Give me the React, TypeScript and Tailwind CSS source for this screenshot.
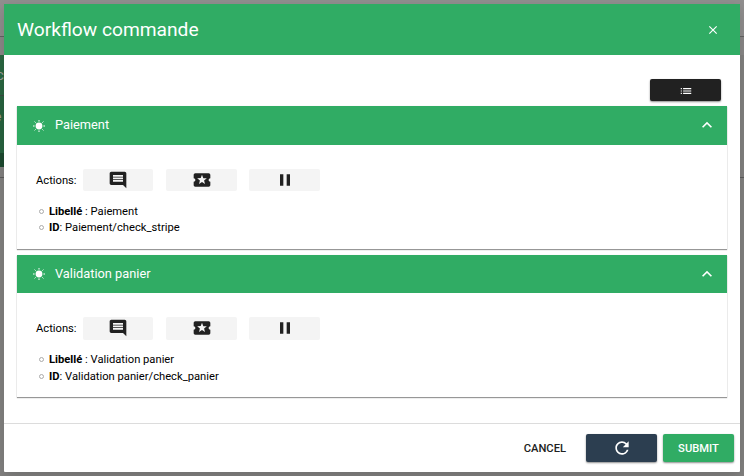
import React from 'react';
import { MdComment, MdLocalPlay, MdPause, MdRefresh, MdList, MdExpandLess, MdClose } from 'react-icons/md';

function SunIcon() {
  return (
    <svg width="12" height="12" viewBox="0 0 12 12" className="shrink-0" fill="#fff">
      <circle cx="6" cy="6" r="3.4" />
      <g stroke="#fff" strokeWidth="1">
        <path d="M6 0v1.6M6 10.4V12M0 6h1.6M10.4 6H12M1.6 1.6l1 1M9.4 9.4l1 1M1.6 10.4l1-1M9.4 2.6l1-1" />
      </g>
    </svg>
  );
}

function ActionButton({ children, narrow }: { children: React.ReactNode; narrow?: boolean }) {
  return (
    <button className={`flex h-full items-center justify-center rounded-xs bg-[#f4f4f4] text-[#212121] ${narrow ? 'w-[70px]' : 'w-[71px]'}`}>
      {children}
    </button>
  );
}

interface StepProps {
  label: string;
  id: string;
  first?: boolean;
}

function Step({ label, id, first }: StepProps) {
  return (
    <section className={`flex flex-col bg-white shadow-[0_1px_1px_rgba(0,0,0,0.4),0_0_1px_rgba(0,0,0,0.08)] ${first ? 'h-[143px]' : 'h-[142px]'}`}>
      <header className={`flex shrink-0 items-center bg-[#30ac64] pr-[10px] pl-4 text-white ${first ? 'h-[39px] pb-px' : 'h-[38px]'}`}>
        <div className={first ? 'pt-[2px]' : ''}>
          <SunIcon />
        </div>
        <span className="ml-[10px] grow text-[12.8px] leading-4">{label}</span>
        <MdExpandLess size={20} />
      </header>
      <div className={`mt-6 flex items-center pl-[19px] ${first ? 'h-[22px]' : 'h-[23px]'}`}>
        <span className="w-[47px] pt-[2px] text-[11.2px]">Actions:</span>
        <div className="flex h-full">
          <ActionButton narrow>
            <MdComment size={20} className="mb-px" />
          </ActionButton>
          <div className="ml-[13px] flex gap-3">
            <ActionButton>
              <MdLocalPlay size={20} className="mb-px" />
            </ActionButton>
            <ActionButton>
              <MdPause size={20} className="mb-px" />
            </ActionButton>
          </div>
        </div>
      </div>
      <ul className={`pl-[22px] text-[11.2px] leading-[16.5px] ${first ? 'mt-[12.6px]' : 'mt-3'}`}>
        <li className="flex items-center">
          <span className="mr-[5px] mb-px size-[5px] rounded-full border border-[#aaa]" />
          <span><b>Libellé</b> : {label}</span>
        </li>
        <li className="flex items-center">
          <span className="mr-[5px] mb-px size-[5px] rounded-full border border-[#aaa]" />
          <span><b>ID</b>: {id}</span>
        </li>
      </ul>
    </section>
  );
}

function Backdrop() {
  return (
    <div className="absolute inset-0 flex flex-col overflow-hidden bg-[#858483] text-[#a6a4a2]">
      <div className="h-9 bg-[#929090]" />
      <div className="h-[19px] border-t border-[#656565] bg-[#8c8a8a]" />
      <div className="h-[41px] w-4 border-b border-[#3c4d43] bg-[#2b6943] pt-3 text-[15px] leading-4">
        <span className="-ml-[4px]">c</span>
      </div>
      <div className="h-[57px] w-4 bg-[#286540] pt-[13px] text-[12px] leading-4">
        <span className="-ml-[5px]">e</span>
      </div>
      <div className="h-[14px] w-4 bg-[#1e4b30]" />
      <div className="h-[11px] border-b border-[#5d5d5d]" />
    </div>
  );
}

export default function App() {
  return (
    <div className="relative h-[476px] w-[744px] overflow-hidden p-1 font-['Roboto',sans-serif] text-black">
      <Backdrop />
      <main className="relative flex h-[468px] w-[736px] flex-col rounded-[1px] bg-white shadow-[0_6px_16px_2px_rgba(0,0,0,0.15)]">
        <header className="flex h-[51px] shrink-0 items-center justify-between bg-[#30ac64] pr-5 pl-[13px] text-white">
          <h1 className="text-[19.2px] leading-6">Workflow commande</h1>
          <MdClose size={14} className="mt-px" />
        </header>
        <div className="flex grow flex-col px-[13px] pt-6">
          <button className="mr-[6px] flex h-[22px] w-[71px] shrink-0 items-center justify-center self-end rounded-xs bg-[#212121] text-white shadow-[0_1px_2px_rgba(0,0,0,0.45)]">
            <MdList size={14} className="mt-px" />
          </button>
          <div className="mt-[5px] flex flex-col gap-[6px]">
            <Step first label="Paiement" id="Paiement/check_stripe" />
            <Step label="Validation panier" id="Validation panier/check_panier" />
          </div>
        </div>
        <footer className="flex h-[49px] shrink-0 items-center justify-end gap-[6px] border-t border-[#dcdcdc] pr-[6px] text-[11.2px] font-medium">
          <button className="mr-[14px] pt-[2px] text-[#212121]">CANCEL</button>
          <button className="flex h-7 w-[71px] items-center justify-center rounded-xs bg-[#2c3e50] text-white shadow-[0_1px_2px_rgba(0,0,0,0.45)]">
            <MdRefresh size={20} />
          </button>
          <button className="h-7 w-[71px] rounded-xs bg-[#30ac64] pt-[2px] text-white shadow-[0_1px_2px_rgba(0,0,0,0.45)]">SUBMIT</button>
        </footer>
      </main>
    </div>
  );
}
